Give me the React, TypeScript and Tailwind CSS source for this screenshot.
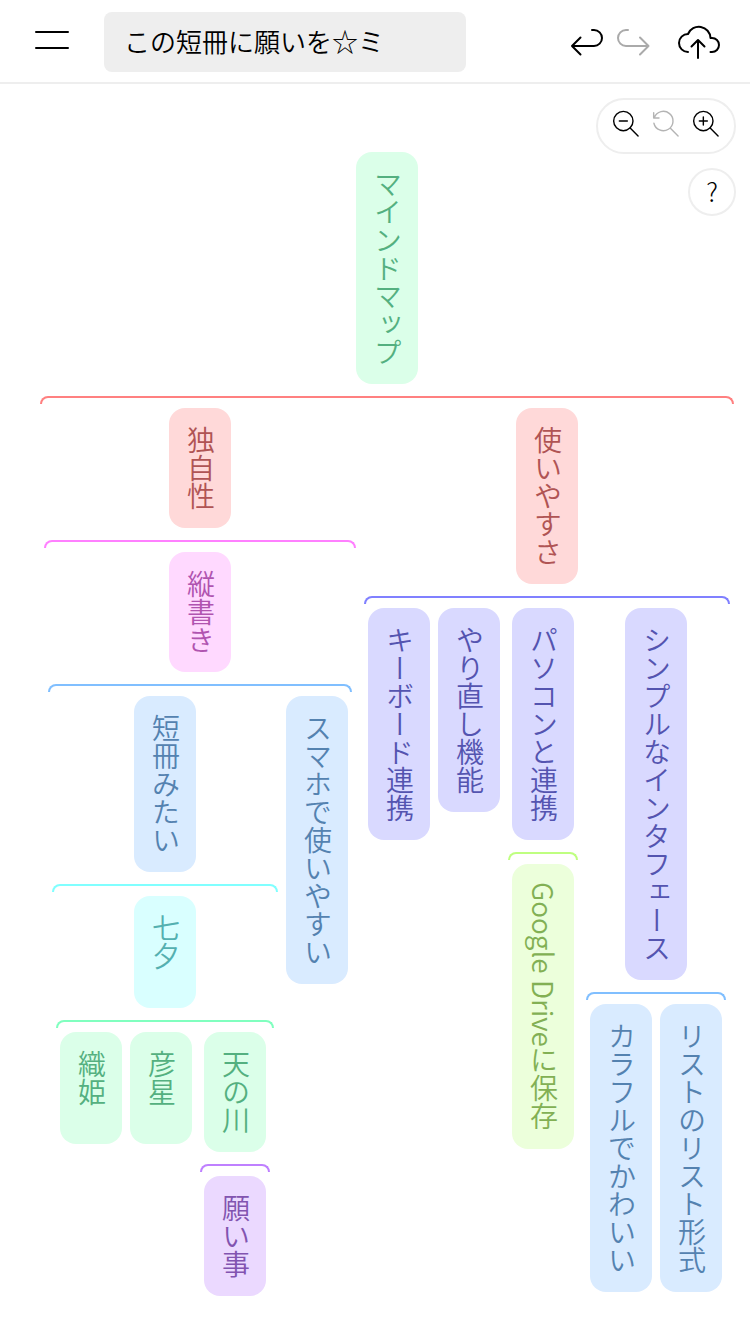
import React, { useState } from "react";

type Hue = "green" | "red" | "pink" | "indigo" | "blue" | "cyan" | "lime" | "purple";

interface MapNode {
  label: string;
  hue: Hue;
  children?: MapNode[];
}

const cardStyles: Record<Hue, string> = {
  green: "bg-[#dbffe9] text-[#54b080]",
  red: "bg-[#ffd9d9] text-[#b05454]",
  pink: "bg-[#ffd9ff] text-[#b054b0]",
  indigo: "bg-[#d9d9ff] text-[#5454b0]",
  blue: "bg-[#d9ebff] text-[#5482b0]",
  cyan: "bg-[#d9ffff] text-[#54b0b0]",
  lime: "bg-[#ecffdb] text-[#82b054]",
  purple: "bg-[#ebd9ff] text-[#8254b0]",
};

const bracketStyles: Record<Hue, string> = {
  green: "border-[#80ffbf]",
  red: "border-[#ff8080]",
  pink: "border-[#ff80ff]",
  indigo: "border-[#8080ff]",
  blue: "border-[#80bfff]",
  cyan: "border-[#80ffff]",
  lime: "border-[#bfff80]",
  purple: "border-[#bf80ff]",
};

const root: MapNode = {
  label: "マインドマップ",
  hue: "green",
  children: [
    {
      label: "独自性",
      hue: "red",
      children: [
        {
          label: "縦書き",
          hue: "pink",
          children: [
            {
              label: "短冊みたい",
              hue: "blue",
              children: [
                {
                  label: "七夕",
                  hue: "cyan",
                  children: [
                    { label: "織姫", hue: "green" },
                    { label: "彦星", hue: "green" },
                    {
                      label: "天の川",
                      hue: "green",
                      children: [{ label: "願い事", hue: "purple" }],
                    },
                  ],
                },
              ],
            },
            { label: "スマホで使いやすい", hue: "blue" },
          ],
        },
      ],
    },
    {
      label: "使いやすさ",
      hue: "red",
      children: [
        { label: "キーボード連携", hue: "indigo" },
        { label: "やり直し機能", hue: "indigo" },
        {
          label: "パソコンと連携",
          hue: "indigo",
          children: [{ label: "Google Driveに保存", hue: "lime" }],
        },
        {
          label: "シンプルなインタフェース",
          hue: "indigo",
          children: [
            { label: "カラフルでかわいい", hue: "blue" },
            { label: "リストのリスト形式", hue: "blue" },
          ],
        },
      ],
    },
  ],
};

function Branch({ node }: { node: MapNode }) {
  return (
    <div className="flex flex-col items-center">
      <div
        className={`min-h-28 w-[62px] rounded-2xl pt-[18px] pr-[16px] pb-[18px] pl-[18px] text-[28px] leading-[28px] font-[350] whitespace-nowrap [writing-mode:vertical-rl] ${cardStyles[node.hue]}`}
      >
        {node.label}
      </div>
      {node.children && (
        <>
          <div
            className={`mt-3 h-2 w-full rounded-t-lg border-2 border-b-0 ${bracketStyles[node.children[0].hue]}`}
          />
          <div className="flex items-start gap-2 px-1 pt-1">
            {node.children.map((child) => (
              <Branch key={child.label} node={child} />
            ))}
          </div>
        </>
      )}
    </div>
  );
}

interface IconProps {
  className: string;
  strokeWidth?: number;
  children: React.ReactNode;
}

function Icon({ className, strokeWidth = 2, children }: IconProps) {
  return (
    <svg
      className={className}
      viewBox="0 0 48 48"
      fill="none"
      stroke="currentColor"
      strokeWidth={strokeWidth}
      strokeLinecap="round"
      strokeLinejoin="round"
      aria-hidden="true"
    >
      {children}
    </svg>
  );
}

export default function App() {
  const [title, setTitle] = useState("この短冊に願いを☆ミ");
  return (
    <div className="min-h-screen bg-white font-['Noto_Sans_CJK_JP',sans-serif] text-black">
      <header className="flex h-[84px] items-start border-b-2 border-[#eee] pt-3 pr-7 pl-7">
        <button type="button" aria-label="メニュー" className="mt-1 mr-7 size-12 shrink-0">
          <Icon className="size-12">
            <path d="M8 16H40M8 32H40" />
          </Icon>
        </button>
        <input
          type="text"
          aria-label="タイトル"
          value={title}
          onChange={(e) => setTitle(e.target.value)}
          className="h-[60px] w-[362px] min-w-0 rounded-lg bg-[#eee] px-5 pb-1 text-[26px] font-[350] outline-none"
        />
        <div className="mt-[6px] ml-auto flex shrink-0 items-center">
          <button type="button" aria-label="元に戻す" className="size-12">
            <Icon className="size-12">
              <path d="M34 12H36A8 8 0 0 1 36 28H14M22.5 19.5L14 28L22.5 36.5" />
            </Icon>
          </button>
          <button type="button" aria-label="やり直す" disabled className="size-12 text-[#aaa]">
            <Icon className="size-12">
              <path d="M22 12H20A8 8 0 0 0 20 28H42.5M34 19.5L42.5 28L34 36.5" />
            </Icon>
          </button>
          <button type="button" aria-label="アップロード" className="ml-5 size-12">
            <Icon className="size-12">
              <path d="M14 34A9 9 0 0 1 14 16A11.7 11.7 0 0 1 36.5 20H38A7 7 0 0 1 38 34H36.5M24 40V22M17.5 28.5L24 22L30.5 28.5" />
            </Icon>
          </button>
        </div>
      </header>

      <main className="relative pt-[68px] pb-9">
        <div className="absolute top-[14px] right-[14px] flex flex-col items-end gap-[14px]">
          <div className="flex h-14 w-[140px] items-start justify-center rounded-full border-2 border-[#eee] bg-white pt-1">
            <button type="button" aria-label="縮小" className="size-10">
              <Icon className="size-10" strokeWidth={1.7}>
                <circle cx="20.8" cy="20.4" r="11.6" />
                <path d="M29 28.8L38.5 38.4M16 20.4H25.6" />
              </Icon>
            </button>
            <button type="button" aria-label="倍率を戻す" disabled className="size-10 text-[#b4b4b4]">
              <Icon className="size-10" strokeWidth={1.7}>
                <path d="M29 28.8L38.5 38.4M9.5 23.1A11.6 11.6 0 1 0 10 16.2M9.2 10.4V16.8H15.6" />
              </Icon>
            </button>
            <button type="button" aria-label="拡大" className="size-10">
              <Icon className="size-10" strokeWidth={1.7}>
                <circle cx="20.8" cy="20.4" r="11.6" />
                <path d="M29 28.8L38.5 38.4M16 20.4H25.6M20.8 15.6V25.2" />
              </Icon>
            </button>
          </div>
          <button
            type="button"
            aria-label="ヘルプ"
            className="flex size-12 items-center justify-center rounded-full border-2 border-[#eee] bg-white pb-[2px] text-[26px] leading-none font-light"
          >
            ?
          </button>
        </div>
        <div className="mr-4 ml-auto w-max">
          <Branch node={root} />
        </div>
      </main>
    </div>
  );
}
